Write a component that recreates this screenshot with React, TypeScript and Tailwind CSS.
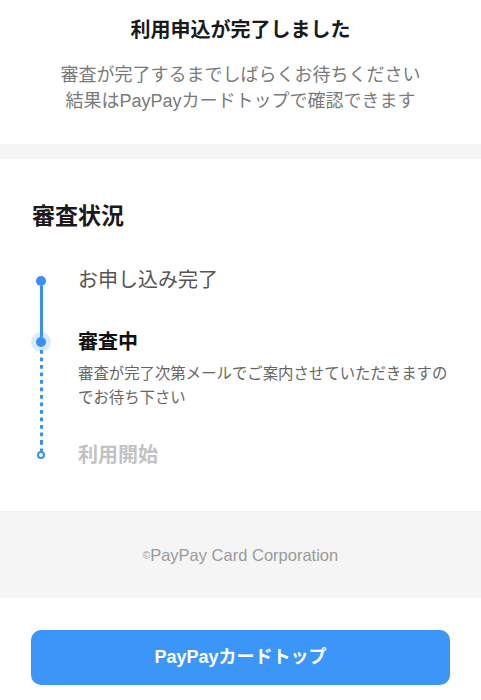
export default function App() {
  return (
    <div className="min-h-[700px] bg-white font-['Liberation_Sans','Noto_Sans_CJK_JP',sans-serif] text-[#1a1a1a]">
      {/* header */}
      <div className="pt-[16px] pb-[30px] text-center">
        <h1 className="text-[20px] leading-[28px] font-bold">利用申込が完了しました</h1>
        <p className="mt-[18px] text-[18px] leading-[26px] text-[#7a7a7a]">
          審査が完了するまでしばらくお待ちください
          <br />
          結果はPayPayカードトップで確認できます
        </p>
      </div>

      <div className="h-[15px] bg-[#f5f5f5]" />

      {/* status */}
      <div className="pl-[32px] pr-[30px] pt-[41px] pb-[42px]">
        <h2 className="text-[23px] leading-[32px] font-bold">審査状況</h2>

        <div className="mt-[34px]">
          {/* step 1 */}
          <div className="flex gap-[28px]">
            <div className="flex w-[18px] shrink-0 flex-col items-center">
              <div className="h-[10px]" />
              <div className="h-[10px] w-[10px] rounded-full bg-[#3a8ff2]" />
              <div className="w-[3px] flex-1 bg-[#3a8ff2]" />
            </div>
            <div className="pb-[34px]">
              <p className="text-[20px] leading-[28px] text-[#555]">お申し込み完了</p>
            </div>
          </div>

          {/* step 2 */}
          <div className="flex gap-[28px]">
            <div className="flex w-[18px] shrink-0 flex-col items-center">
              <div className="h-[9px] w-[3px] bg-[#3a8ff2]" />
              <div className="h-[10px] w-[10px] rounded-full bg-[#3a8ff2] shadow-[0_0_0_5px_rgba(58,143,242,0.18)]" />
              <div className="mt-[3px] w-[3px] flex-1 bg-[linear-gradient(#3a8ff2_45%,transparent_45%)] bg-[length:3px_7.5px]" />
            </div>
            <div className="pb-[31px]">
              <p className="text-[20px] leading-[28px] font-bold text-[#111]">審査中</p>
              <p className="mt-[6px] text-[15.4px] leading-[24px] text-[#666]">
                審査が完了次第メールでご案内させていただきますのでお待ち下さい
              </p>
            </div>
          </div>

          {/* step 3 */}
          <div className="flex gap-[28px]">
            <div className="flex w-[18px] shrink-0 flex-col items-center">
              <div className="h-[10px] w-[3px] bg-[linear-gradient(#3a8ff2_45%,transparent_45%)] bg-[length:3px_7.5px]" />
              <div className="h-[8px] w-[8px] rounded-full border-2 border-[#3a8ff2] bg-white" />
            </div>
            <p className="text-[20px] leading-[28px] font-bold text-[#c2c2c2]">利用開始</p>
          </div>
        </div>
      </div>

      {/* footer */}
      <div className="flex h-[87px] items-center justify-center border-t border-[#eeeeee] bg-[#f5f5f5]">
        <p className="text-[16.5px] text-[#9a9a9a]">
          <span className="text-[10px] align-[2px]">©</span>PayPay Card Corporation
        </p>
      </div>

      <div className="px-[31px] pt-[32px] pb-[14px]">
        <button className="h-[55px] w-full rounded-[10px] bg-[#3c96f8] text-[18px] font-bold text-white">
          PayPayカードトップ
        </button>
      </div>
    </div>
  );
}
